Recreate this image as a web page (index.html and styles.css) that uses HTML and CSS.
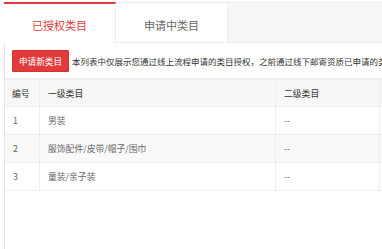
FILE: index.html
```html
<!DOCTYPE html>
<html lang="zh-CN">
<head>
<meta charset="utf-8">
<title>类目管理</title>
<link rel="stylesheet" href="styles.css">
</head>
<body>
<div class="page">
  <div class="tabs">
    <div class="tab active">已授权类目</div>
    <div class="tab">申请中类目</div>
    <div class="tab-fill"></div>
  </div>
  <div class="toolbar">
    <button class="btn">申请新类目</button>
    <span class="note">本列表中仅展示您通过线上流程申请的类目授权，之前通过线下邮寄资质已申请的类目授权不在此列表中展示</span>
  </div>
  <table class="grid">
    <thead>
      <tr>
        <th class="c-no">编号</th>
        <th class="c-first">一级类目</th>
        <th class="c-second">二级类目</th>
        <th class="c-more"></th>
      </tr>
    </thead>
    <tbody>
      <tr><td>1</td><td>男装</td><td>--</td><td></td></tr>
      <tr class="alt"><td>2</td><td>服饰配件/皮带/帽子/围巾</td><td>--</td><td></td></tr>
      <tr><td>3</td><td>童装/亲子装</td><td>--</td><td></td></tr>
    </tbody>
  </table>
</div>
</body>
</html>
```

FILE: styles.css
```css
html, body {
  margin: 0;
  padding: 0;
  overflow: hidden;
  background: #fff;
}
body {
  font-family: "Noto Sans CJK SC", "Noto Sans", sans-serif;
  color: #333;
}
.page {
  margin: 2px 0 0 4px;
  border-left: 1px solid #e6e6e6;
  min-height: 247px;
  box-sizing: border-box;
  width: 600px;
}
.tabs {
  display: flex;
  height: 41px;
  margin-left: -1px;
}
.tab {
  box-sizing: border-box;
  width: 112px;
  height: 41px;
  text-align: center;
  font-size: 11px;
  color: #666;
  padding-top: 6px;
  line-height: 33px;
  background: #fff;
  border-top: 1px solid #ececec;
  border-right: 1px solid #ececec;
  border-bottom: 1px solid #ececec;
}
.tab.active {
  color: #e4393c;
  border-top: 2px solid #e4393c;
  border-bottom: 0;
  border-right: 1px solid #ececec;
  padding-top: 5px;
}
.tab-fill {
  flex: 1;
  background: #f6f6f6;
  border-top: 1px solid #ececec;
  border-bottom: 1px solid #ececec;
  box-sizing: border-box;
}
.toolbar {
  display: flex;
  align-items: center;
  gap: 3px;
  height: 36px;
  box-sizing: border-box;
  padding: 7px 0 6px 7px;
  border-bottom: 1px solid #ececec;
  white-space: nowrap;
}
.btn {
  flex: none;
  width: 57px;
  height: 22px;
  padding: 0;
  border: 1px solid #d9302f;
  border-radius: 1px;
  background: #e23b3b;
  color: #fff;
  font-family: inherit;
  font-size: 8.6px;
  line-height: 20px;
}
.note {
  font-size: 8.5px;
  color: #333;
}
.grid {
  border-collapse: separate;
  border-spacing: 0;
  table-layout: fixed;
  width: 495px;
  font-size: 8.8px;
}
.grid th, .grid td {
  box-sizing: border-box;
  text-align: left;
  padding: 0 0 0 8px;
  border-right: 1px solid #eeeeee;
  border-bottom: 1px solid #eeeeee;
  white-space: nowrap;
}
.grid th {
  height: 28px;
  font-weight: normal;
  color: #333;
  background: #f7f7f7;
  border-top: 1px solid #f1f1f1;
}
.grid td {
  height: 28px;
  color: #666;
}
.grid tr.alt td {
  background: #f9f9f9;
}
.c-no { width: 35px; padding-left: 7px !important; }
.c-first { width: 236px; }
.c-second { width: 104px; }
.c-more { width: 120px; }
```
